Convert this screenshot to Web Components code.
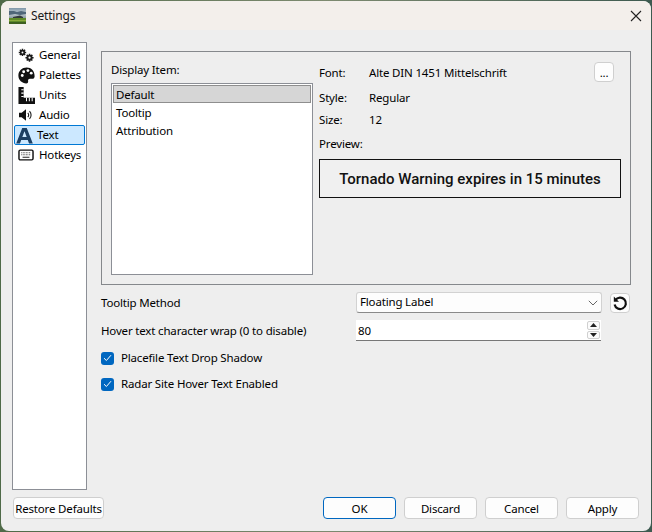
<!DOCTYPE html>
<html><head><meta charset="utf-8">
<style>
html,body{margin:0;height:532px;overflow:hidden}
body{background:linear-gradient(90deg,#4f6a48,#7d8a70 50%,#3d5a50);font:11.5px "Noto Sans",sans-serif;letter-spacing:-.17px;color:#000}
</style></head><body>
<app-dialog>
  <title-bar slot="title">Settings</title-bar>
  <nav-list slot="nav">
    <nav-item icon="gears">General</nav-item>
    <nav-item icon="palette">Palettes</nav-item>
    <nav-item icon="ruler">Units</nav-item>
    <nav-item icon="audio">Audio</nav-item>
    <nav-item icon="text" selected>Text</nav-item>
    <nav-item icon="keyboard">Hotkeys</nav-item>
  </nav-list>
  <text-page slot="page"></text-page>
  <push-button slot="restore" w="91">Restore Defaults</push-button>
  <push-button slot="actions" w="73" primary>OK</push-button>
  <push-button slot="actions" w="73">Discard</push-button>
  <push-button slot="actions" w="73">Cancel</push-button>
  <push-button slot="actions" w="73">Apply</push-button>
</app-dialog>
<script>
function def(name,html,init){
  customElements.define(name,class extends HTMLElement{
    constructor(){super();this.attachShadow({mode:'open'}).innerHTML=html;}
    connectedCallback(){if(init)init(this);}
  });
}
def('app-dialog',`<style>
:host{display:flex;flex-direction:column;box-sizing:border-box;width:650px;height:530px;margin:1px;background:#eeeeee;border-radius:8px;overflow:hidden}
.main{flex:1;display:flex;gap:14px;padding:12px 0 0 11px;min-height:0}
.foot{display:flex;justify-content:space-between;padding:7px 12px 12px 12px}
.acts{display:flex;gap:8px}
.navc{display:flex;width:75px}
.pagec{width:530px;padding-top:9px}
</style>
<slot name="title"></slot>
<div class="main"><div class="navc"><slot name="nav"></slot></div><div class="pagec"><slot name="page"></slot></div></div>
<div class="foot"><slot name="restore"></slot><div class="acts"><slot name="actions"></slot></div></div>`);

def('title-bar',`<style>
:host{display:flex;align-items:center;height:29px;background:#f3efeb;flex:none;padding-left:8px;color:#1a1a1a;font-size:12px}
svg{display:block}
.t{margin-left:5px;flex:1}
.x{margin-right:9px}
</style>
<svg width="17" height="16" viewBox="0 0 17 16">
<defs><linearGradient id="s" x1="0" y1="0" x2="0" y2="1"><stop offset="0" stop-color="#7f97a8"/><stop offset=".55" stop-color="#c3ced4"/><stop offset="1" stop-color="#8a9aa0"/></linearGradient></defs>
<rect width="17" height="10" fill="url(#s)"/>
<path d="M0 3h5l3 1 4-1 5 1v2l-6 1-5-1-6 1z" fill="#4f6678"/>
<path d="M4 9l7-1.5 3 1.5v1H4z" fill="#333a3c"/>
<rect y="10" width="17" height="6" fill="#5f8a28"/>
<rect y="12" width="17" height="1" fill="#8aa83a"/>
<rect y="14" width="17" height="2" fill="#3f5f20"/>
</svg>
<span class="t"><slot></slot></span>
<svg class="x" width="12" height="12" viewBox="0 0 12 12"><path d="M1 1l10 10M11 1L1 11" stroke="#222" stroke-width="1.1" fill="none"/></svg>`);

def('nav-list',`<style>
:host{display:flex;flex-direction:column;box-sizing:border-box;width:75px;height:448px;background:#fff;border:1px solid #8c8f96;padding:2px 1px}
</style><slot></slot>`);

const ICONS={
gears:`<svg width="16" height="15" viewBox="0 0 18 17"><g fill="#1b1b1b"><circle cx="5" cy="5" r="2.9"/><g stroke="#1b1b1b" stroke-width="1.7"><path d="M5 .8v8.400M.8 5h8.400M2 2l6 6M8 2l-6 6"/></g><g stroke="#1b1b1b" stroke-width="1.8"><path d="M13 6.400v9.200M8.400 11h9.200M9.800 7.800l6.400 6.400M16.200 7.800l-6.400 6.400"/></g><circle cx="13" cy="11" r="3.400"/></g><circle cx="5" cy="5" r="1.100" fill="#fff"/><circle cx="13" cy="11" r="1.300" fill="#fff"/></svg>`,
palette:`<svg width="17" height="17" viewBox="0 0 18 18"><path d="M9.200 .6C4.400.6.400 4.200.400 9s4 8.400 8.300 8.400c1.600 0 2.300-1 2-2.200-.4-1.500.4-2.800 2-2.800h2.300c1.500 0 2.600-1 2.600-2.700C17.600 4.200 13.900.6 9.200.6z" fill="#111"/><circle cx="4.500" cy="9" r="1.500" fill="#fff"/><circle cx="6" cy="5" r="1.500" fill="#fff"/><circle cx="10.500" cy="3.800" r="1.500" fill="#fff"/><circle cx="14" cy="6.500" r="1.500" fill="#fff"/></svg>`,
ruler:`<svg width="17" height="17" viewBox="0 0 18 18"><path d="M.5 0h5.500v11.500h12V18H.5z" fill="#111"/><path d="M3.500 3h2.500M3.500 6.500h2.500M3.500 10h2.500M9 15v-3.500M12 15v-3.500M15 15v-3.500" stroke="#fff" stroke-width="1.100" fill="none"/></svg>`,
audio:`<svg width="16" height="14" viewBox="0 0 18 16"><path d="M1 5.500h3L9 1.500v13l-5-4H1z" fill="#111"/><path d="M11 5.500a3.500 3.500 0 0 1 0 5M13 3.500a6.500 6.500 0 0 1 0 9" stroke="#222" stroke-width="1.300" fill="none"/></svg>`,
text:`<svg width="17" height="17" viewBox="0 0 18 18"><path d="M.2 17.500L6.600 1h4.800l6.400 16.500h-4l-1.300-3.700H5.500L4.200 17.500zM6.700 10.700h4.600L9 4.500z" fill="#1c3f63" fill-rule="evenodd"/></svg>`,
keyboard:`<svg width="16" height="12" viewBox="0 0 18 14"><rect x=".8" y="1.300" width="16.400" height="11.400" rx="1.500" fill="#fff" stroke="#111" stroke-width="1.700"/><path d="M3.500 4.500h11M3.500 6.800h11" stroke="#444" stroke-width="1.200" stroke-dasharray="1 .8"/><path d="M5 9.700h8" stroke="#222" stroke-width="1.300"/></svg>`
};
def('nav-item',`<style>
:host{display:flex;align-items:center;box-sizing:border-box;height:20px;padding-left:2px;border:1px solid transparent;border-radius:2px;white-space:nowrap}
:host([selected]){background:#cce8ff;border-color:#0078d4;padding-left:0}
.i{width:18px;height:18px;display:flex;align-items:center;justify-content:center;flex:none}
.l{margin-left:4px;padding-bottom:2px}
</style><span class="i" id="i"></span><span class="l"><slot></slot></span>`,
el=>{el.shadowRoot.getElementById('i').innerHTML=ICONS[el.getAttribute('icon')]||'';});

def('push-button',`<style>
:host{display:inline-flex;align-items:center;justify-content:center;box-sizing:border-box;height:22px;background:#fdfdfd;border:1px solid #cfcfcf;border-radius:4px;white-space:nowrap}
:host([primary]){border-color:#0067c0}
</style><slot></slot>`,el=>{const w=el.getAttribute('w');if(w)el.style.width=w+'px';if(el.hasAttribute('h'))el.style.height=el.getAttribute('h')+'px';});

def('list-box',`<style>
:host{display:flex;flex-direction:column;box-sizing:border-box;background:#fff;border:1px solid #8c8f96;padding:1px}
</style><slot></slot>`);
def('list-row',`<style>
:host{display:flex;align-items:center;box-sizing:border-box;height:18px;padding-left:3px}
:host([selected]){background:#d6d6d6;border:1px solid #8e8e8e;padding-left:2px}
</style><slot></slot>`);

def('combo-box',`<style>
:host{display:flex;align-items:center;justify-content:space-between;box-sizing:border-box;width:246px;height:21px;background:#fdfdfd;border:1px solid #d2d2d2;border-bottom-color:#8a8a8a;border-radius:3px;padding:0 3px 2px 3px}
</style><slot></slot><svg width="10" height="6" viewBox="0 0 10 6" style="margin-top:2px"><path d="M.8.8L5 5l4.200-4.200" stroke="#666" fill="none"/></svg>`);

def('spin-box',`<style>
:host{display:flex;align-items:center;justify-content:space-between;box-sizing:border-box;width:245px;height:21px;background:#fff;border-bottom:1px solid #777;padding:0 1px 0 2px}
.s{display:flex;flex-direction:column;gap:1px}
.b{width:13px;height:8.500px;background:#fbfbfb;border:1px solid #d0d0d0;border-radius:2px;box-sizing:border-box;display:flex;align-items:center;justify-content:center}
</style><slot></slot><div class="s"><div class="b"><svg width="7" height="4"><path d="M3.500 0L7 4H0z" fill="#222"/></svg></div><div class="b"><svg width="7" height="4"><path d="M0 0h7L3.500 4z" fill="#222"/></svg></div></div>`);

def('check-box',`<style>
:host{display:flex;align-items:center;gap:7px;height:14px}
.c{width:13px;height:13px;background:#0067c0;border-radius:3px;display:flex;align-items:center;justify-content:center;flex:none}
.t{padding-bottom:2px}
</style><span class="c"><svg width="9" height="8" viewBox="0 0 9 8"><path d="M1 4.200L3.400 6.500 8 1.200" stroke="#fff" fill="none" stroke-width="1"/></svg></span><span class="t"><slot></slot></span>`);

def('text-page',`<style>
:host{display:flex;flex-direction:column}
.group{box-sizing:border-box;height:234px;border:1px solid #85888c;display:flex;gap:6px;padding:10px 9px 9px 9px}
.left{display:flex;flex-direction:column;width:202px}
.cap{height:14px;display:flex;align-items:center;flex:none;margin-bottom:7px}
list-box{flex:1}
.right{flex:1;display:flex;flex-direction:column;width:302px}
.row{display:flex;align-items:center;box-sizing:border-box;padding-bottom:2px}
.k{width:50px;flex:none}
.v{flex:1}
.r1{height:22px}
.r2{height:22px;margin-top:3px}
.r3{height:22px}
.r4{height:22px;margin-top:2px}
.dots{margin-right:7px;align-self:flex-start}
.prev{box-sizing:border-box;height:39px;margin-top:4px;border:1px solid #111;background:#f0f0f0;display:flex;align-items:center;justify-content:center;font:500 15px Roboto,sans-serif;letter-spacing:0;color:#111}
.form{display:grid;grid-template-columns:255px auto 1fr;margin-top:7px;align-items:center}
.lbl{height:21px;display:flex;align-items:center;padding-bottom:1px;box-sizing:border-box}
.reset{margin-left:8px}
.second{margin-top:7px}
.checks{display:flex;flex-direction:column;gap:12px;margin-top:10px}
</style>
<div class="group">
  <div class="left"><div class="cap">Display Item:</div>
    <list-box><list-row selected>Default</list-row><list-row>Tooltip</list-row><list-row>Attribution</list-row></list-box>
  </div>
  <div class="right">
    <div class="row r1"><span class="k">Font:</span><span class="v">Alte DIN 1451 Mittelschrift</span><push-button class="dots" w="20" h="20">...</push-button></div>
    <div class="row r2"><span class="k">Style:</span><span class="v">Regular</span></div>
    <div class="row r3"><span class="k">Size:</span><span class="v">12</span></div>
    <div class="row r4"><span class="k">Preview:</span></div>
    <div class="prev">Tornado Warning expires in 15 minutes</div>
  </div>
</div>
<div class="form">
  <div class="lbl">Tooltip Method</div><combo-box>Floating Label</combo-box><push-button class="reset" w="20" h="20"><svg width="16" height="16" viewBox="0 0 16 16" style="display:block"><path d="M3.400 5.200A5.700 5.700 0 1 1 2.600 9.500" stroke="#111" stroke-width="2.200" fill="none"/><path d="M1.800 1.500v5.200H7z" fill="#111"/></svg></push-button>
  <div class="lbl second">Hover text character wrap (0 to disable)</div><spin-box class="second">80</spin-box><span></span>
</div>
<div class="checks"><check-box>Placefile Text Drop Shadow</check-box><check-box>Radar Site Hover Text Enabled</check-box></div>`);
</script>
</body></html>
